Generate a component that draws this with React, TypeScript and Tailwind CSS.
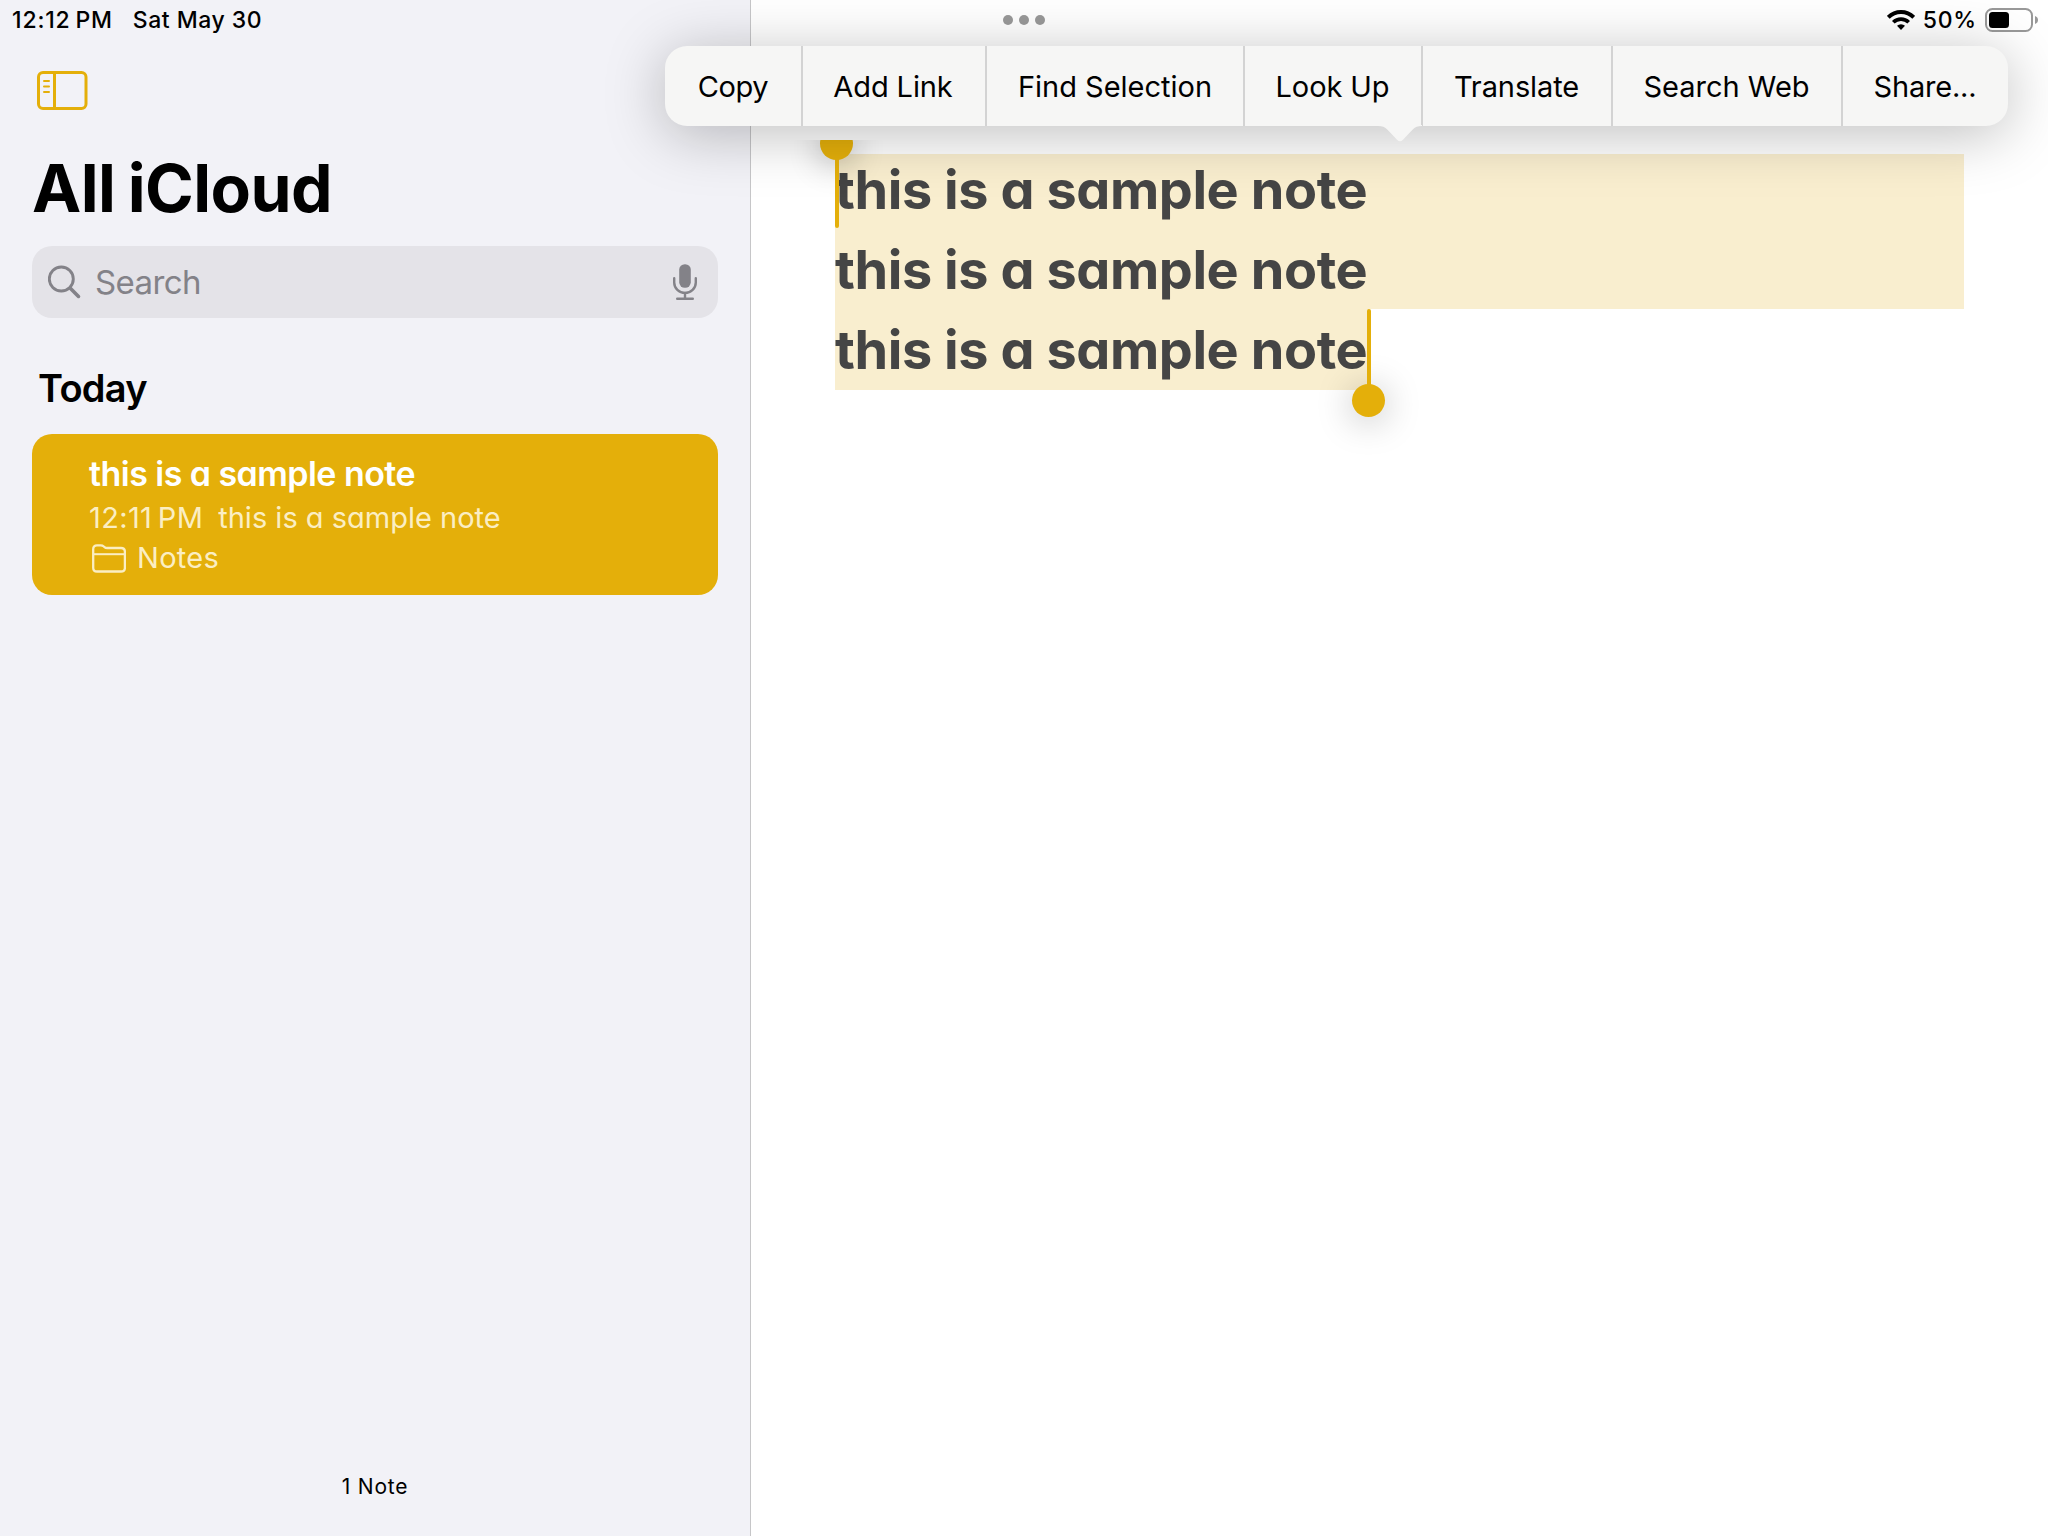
import clsx from 'clsx'

interface MenuItem {
  label: string
  className: string
}

const menuItems: MenuItem[] = [
  { label: 'Copy', className: 'w-[138px] border-r-2 tracking-[-0.42px]' },
  { label: 'Add Link', className: 'w-[184px] border-r-2 pr-[2px] tracking-[-0.1px]' },
  { label: 'Find Selection', className: 'w-[258px] border-r-2' },
  { label: 'Look Up', className: 'w-[178px] border-r-2 pr-[1px] tracking-[-0.1px]' },
  { label: 'Translate', className: 'w-[190px] border-r-2 pr-[1px] tracking-[-0.1px]' },
  { label: 'Search Web', className: 'w-[230px] border-r-2 pr-[1px]' },
  { label: 'Share...', className: 'w-[165px] pr-[1px] tracking-[-0.2px]' },
]

function SidebarIcon() {
  return (
    <svg className="h-[39px] w-[51px]" viewBox="0 0 51 39" fill="none" stroke="#e4af0a">
      <rect x="1.5" y="1.5" width="47.5" height="36" rx="4.5" strokeWidth="3" />
      <path d="M17.5 1.5v36" strokeWidth="3" />
      <path d="M7 10h5M7 15.5h5M7 21h5" strokeWidth="2" strokeLinecap="round" />
    </svg>
  )
}

function SearchIcon() {
  return (
    <svg className="h-[34px] w-[34px]" viewBox="0 0 34 34" fill="none" stroke="#838288" strokeLinecap="round">
      <circle cx="13.3" cy="14" r="12" strokeWidth="2.9" />
      <path d="M22.3 23.2l8.200 8.200" strokeWidth="3.600" />
    </svg>
  )
}

function MicIcon() {
  return (
    <svg className="h-9 w-6" viewBox="0 0 24 36" fill="none" stroke="#838288" strokeWidth="2.4" strokeLinecap="round">
      <rect x="6.2" y="0.2" width="11.6" height="23.6" rx="5.6" fill="#838288" stroke="none" />
      <path d="M1.2 14.3v4.2a10.8 10.4 0 0 0 21.6 0v-4.2" />
      <path d="M12 29v5.6M4.2 34.7h15.6" />
    </svg>
  )
}

function FolderIcon() {
  return (
    <svg className="h-[29px] w-[34px]" viewBox="0 0 34 29" fill="none" stroke="#fbeec3" strokeWidth="2.3">
      <path d="M1.200 5.200C1.200 2.500 2.600 1.300 5 1.300h3.800c1.400 0 2.100.4 3 1.200l.7.600c.8.700 1.400.9 2.600.9H29c2.600 0 3.900 1.300 3.900 3.800v15.900c0 2.500-1.300 3.800-3.900 3.800H5c-2.600 0-3.800-1.300-3.800-3.800z" />
      <path d="M1.500 10.200h31" strokeWidth="2" />
    </svg>
  )
}

function WifiIcon() {
  return (
    <svg className="h-5 w-7" viewBox="0 0 28 20" fill="none" stroke="#000" strokeWidth="3.9">
      <path d="M1.300 7.300a17.900 17.900 0 0 1 25.400 0" />
      <path d="M6.300 12.300a10.900 10.900 0 0 1 15.400 0" strokeWidth="3.700" />
      <path d="M14 19.900l-4-4.100a5.700 5.700 0 0 1 8 0z" fill="#000" stroke="none" />
    </svg>
  )
}

function BatteryIcon() {
  return (
    <svg className="h-6 w-[54px]" viewBox="0 0 54 24" fill="none">
      <rect x="1" y="1" width="46" height="22" rx="6.500" stroke="#999" strokeWidth="2" />
      <rect x="4" y="4" width="20" height="16" rx="3.500" fill="#000" />
      <path d="M50 8c2 .7 3 2.200 3 4s-1 3.300-3 4z" fill="#999" />
    </svg>
  )
}

function Sidebar() {
  return (
    <aside className="flex w-[751px] shrink-0 flex-col border-r border-[#c6c6c8] bg-[#f2f2f7]">
      <div className="flex h-10 items-center gap-[20px] pl-3 text-[23px] leading-10 font-medium">
        <span className="tracking-[0.83px]">12:12{'\u202f'}PM</span>
        <span className="tracking-[0.5px]">Sat May 30</span>
      </div>
      <div className="flex h-[108px] items-start pt-[31px] pl-[37px]">
        <SidebarIcon />
      </div>
      <h1 className="pl-8 text-[66px] leading-[80px] font-bold tracking-[-0.6px] [word-spacing:-2.5px]">All iCloud</h1>

      <div className="mx-8 mt-[18px] flex h-[72px] items-center rounded-[20px] bg-[#e4e3e8] pr-[21px] pl-4 text-[#838288]">
        <SearchIcon />
        <span className="ml-[13px] flex-1 text-[33px] leading-[72px] tracking-[-0.6px]">Search</span>
        <MicIcon />
      </div>

      <h2 className="mt-[46px] pl-[38px] text-[38px] leading-[48px] font-semibold tracking-[-0.7px]">Today</h2>

      <div className="mx-8 mt-[22px] h-[161px] rounded-[20px] bg-[#e4af0a] pt-[18px] pl-[57px] text-[29px] leading-10 text-[#fbeec3]">
        <div className="text-[34px] leading-[44px] font-semibold tracking-[-0.55px] text-white [font-feature-settings:'cv11']">
          this is a sample note
        </div>
        <div className="mt-[2px] flex">
          <span className="tracking-[0.35px]">12:11{'\u202f'}PM</span>
          <span className="ml-[15px] [font-feature-settings:'cv11']">this is a sample note</span>
        </div>
        <div className="flex items-center pl-[3px]">
          <FolderIcon />
          <span className="ml-[11px] tracking-[0.29px]">Notes</span>
        </div>
      </div>

      <div className="mt-auto mb-[29px] text-center text-[21px] leading-10 tracking-[0.75px]">1 Note</div>
    </aside>
  )
}

function Note() {
  return (
    <div className="relative h-[1396px] overflow-hidden pt-[14px] pl-[84px] text-[54px] leading-[80px] font-bold tracking-[-0.42px] text-[#454545] [font-feature-settings:'cv11']">
      <div className="flow-root h-[155px] w-[1129px] bg-[#f9eecf]">
        <p className="-mt-[4px]">this is a sample note</p>
        <p>this is a sample note</p>
      </div>
      <div className="h-[81px] w-[534px] bg-[#f9eecf] pt-[1px]">
        <p className="whitespace-nowrap">this is a sample note</p>
      </div>

      {/* selection handles */}
      <div className="absolute -top-[13px] left-[69px] size-[33px] rounded-full bg-[#e4af0a] shadow-[0_4px_32px_rgba(0,0,0,0.3)]" />
      <div className="absolute top-[10px] left-[84px] h-[78px] w-1 rounded-b-full bg-[#e4af0a]" />
      <div className="absolute top-[244px] left-[601px] size-[33px] rounded-full bg-[#e4af0a] shadow-[0_4px_36px_rgba(0,0,0,0.28)]" />
      <div className="absolute top-[169px] left-[616px] h-20 w-1 rounded-t-full bg-[#e4af0a]" />
    </div>
  )
}

function EditMenu() {
  return (
    <div className="absolute top-[46px] left-[665px] flex h-20 rounded-[22px] bg-[#f6f6f5] shadow-[0_8px_60px_rgba(0,0,0,0.26)]">
      {menuItems.map((item) => (
        <button
          key={item.label}
          type="button"
          className={clsx('border-[#d3d3d3] text-center text-[29px] leading-[82px] whitespace-nowrap', item.className)}
        >
          {item.label}
        </button>
      ))}
      <svg className="absolute top-[79px] left-[713px] h-[17px] w-11" viewBox="0 0 44 16" preserveAspectRatio="none" fill="#f6f6f5">
        <path d="M0 0v1c4 0 7 1 9.500 3.500l9.500 9.300c2 1.900 4 1.900 6 0l9.500-9.300C37 2 40 1 44 1V0z" />
      </svg>
    </div>
  )
}

export default function App() {
  return (
    <div className="relative flex h-[1536px] w-[2048px] overflow-hidden bg-white font-['Inter',sans-serif] text-black">
      <Sidebar />
      <main className="min-w-0 flex-1">
        <div className="flex h-[140px] items-start">
          <div className="flex h-10 flex-1 items-center gap-[6px] pl-[252px]">
            <i className="size-[10px] rounded-full bg-[#999]" />
            <i className="size-[10px] rounded-full bg-[#999]" />
            <i className="size-[10px] rounded-full bg-[#999]" />
          </div>
          <div className="flex h-10 items-center pr-[9px]">
            <WifiIcon />
            <span className="ml-2 text-[23px] leading-10 font-medium tracking-[0.8px]">50%</span>
            <span className="ml-2 flex">
              <BatteryIcon />
            </span>
          </div>
        </div>
        <Note />
      </main>
      <EditMenu />
    </div>
  )
}
